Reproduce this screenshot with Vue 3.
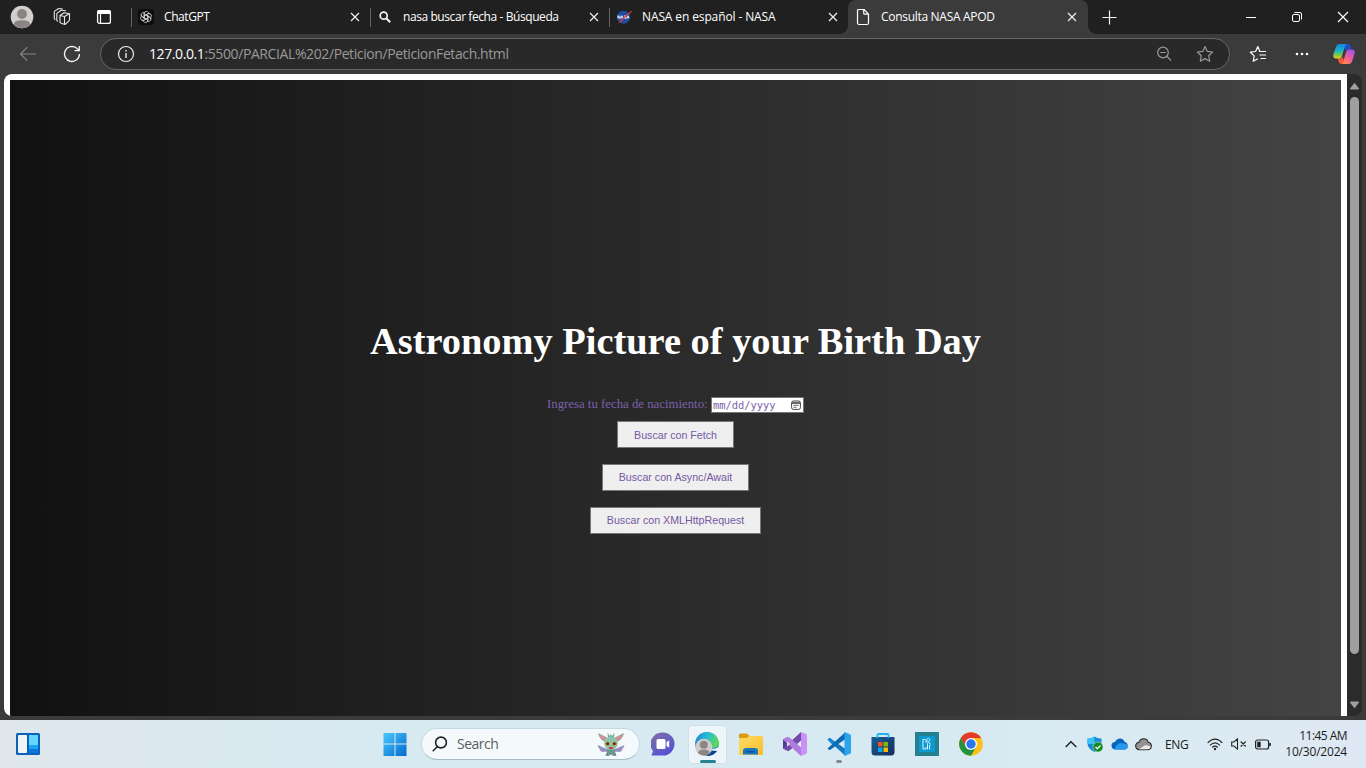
<script setup>
const tabs = [
  { title: 'ChatGPT', icon: 'gpt', fit: 'fit-a' },
  { title: 'nasa buscar fecha - Búsqueda', icon: 'lens', fit: 'fit-b' },
  { title: 'NASA en español - NASA', icon: 'nasa', fit: 'fit-c' },
  { title: 'Consulta NASA APOD', icon: 'doc', fit: 'fit-d', active: true }
]
const petals = [0, 60, 120, 180, 240, 300]
const buttons = [
  { text: 'Buscar con Fetch', size: 'w1' },
  { text: 'Buscar con Async/Await', size: 'w2' },
  { text: 'Buscar con XMLHttpRequest', size: 'w3' }
]
</script>

<template>
  <div class="screen">
    <header class="tabbar">
      <div class="slot s44">
        <svg width="24" height="24" viewBox="0 0 24 24"><circle cx="12" cy="12" r="11.3" fill="#d2d0ce"/><circle cx="12" cy="9" r="5" fill="#8a8582"/><path d="M4 19.500c0-3 2.500-4.200 8-4.200s8 1.200 8 4.200c-4 5-12 5-16 0z" fill="#8a8582"/></svg>
      </div>
      <div class="slot s36">
        <svg width="18" height="18" viewBox="0 0 18 18" fill="none" stroke="#e8e8e8" stroke-width="1.100" stroke-linejoin="round" stroke-linecap="round"><path d="M7 7.500l4.500 1 5-3v6.300q0 .8-.7 1.300L12 16.500l-4-1.300q-1-.3-1-1.200zM11.500 8.700v7.500M7 7.500l4-2.700 5.500.7M4.500 13.200q-.7-.3-.7-1.200V6q0-.7.600-1.100L8 2.500q.5-.3 1-.2l3.500.5M2 11.500q-.7-.3-.7-1.200V4q0-.7.600-1.100L5.300.8q.5-.3 1-.2L9.500 1"/></svg>
      </div>
      <div class="slot s48">
        <svg width="16" height="16" viewBox="0 0 16 16"><rect x="1.600" y="1.600" width="12.800" height="12.800" rx="2" fill="none" stroke="#fff" stroke-width="1.300"/><path d="M1 3q0-2 2-2h10q2 0 2 2v2H1z" fill="#fff"/><path d="M4.500 5v9" stroke="#fff" stroke-width="1.200"/></svg>
      </div>
      <i class="pad"></i>
      <div v-for="t in tabs" :key="t.title" class="tab" :class="{ active: t.active }">
        <div class="fav">
          <svg v-if="t.icon === 'gpt'" width="16" height="16" viewBox="0 0 16 16"><rect width="16" height="16" rx="3" fill="#0d0d0d"/><g fill="none" stroke="#dcdcdc" stroke-width=".75" stroke-linecap="round"><path v-for="r in petals" :key="r" :transform="`rotate(${r} 8 8)`" d="M6.200 9V4.800C6.200 1.900 9.800 1.500 10.800 3.900M6.200 6.900l3.500-2q1.200-.7 2.200 0"/></g></svg>
          <svg v-else-if="t.icon === 'lens'" width="16" height="16" viewBox="0 0 16 16" fill="none" stroke="#f2f2f2" stroke-width="1.700"><circle cx="6.700" cy="6.700" r="3.500"/><path d="m9.200 9.200 4 4" stroke-width="2"/></svg>
          <svg v-else-if="t.icon === 'nasa'" width="16" height="16" viewBox="0 0 16 16"><circle cx="7.500" cy="8.200" r="6.500" fill="#1e4ca0"/><path d="M2 9.500V6.700l2 2.800V6.700M5 9.500l1-2.800 1 2.800M10 6.800H8.500v1.300H10v1.300H8.300M11 9.500l1-2.800 1 2.800" fill="none" stroke="#fff" stroke-width=".9"/><path d="M2.500 14C6 11 9 6 15.500 2.500 11 6 8 10 4 13.500" fill="none" stroke="#e43b35"/></svg>
          <svg v-else width="16" height="18" viewBox="0 0 16 18" fill="none" stroke="#fff" stroke-width="1.200" stroke-linejoin="round"><path d="M3.500 1.500H9l4.500 4.700V15q0 1.500-1.500 1.500H4Q2.500 16.500 2.500 15V2.500q0-1 1-1zM8.700 1.600v3.600q0 1 1 1h3.700"/></svg>
        </div>
        <span class="ttl" :class="t.fit">{{ t.title }}</span>
        <svg class="close" width="10" height="10" viewBox="0 0 10 10" stroke="#f0f0f0" stroke-width="1.200"><path d="m1 1 8 8M9 1 1 9"/></svg>
      </div>
      <div class="slot s43">
        <svg width="15" height="15" viewBox="0 0 15 15" stroke="#f5f5f5"><path d="M7.500.5v14M.5 7.500h14" stroke-width="1.200"/></svg>
      </div>
      <div class="winctl">
        <div class="slot s46"><svg width="12" height="12"><path d="M1 6.500h10" stroke="#fff"/></svg></div>
        <div class="slot s46"><svg width="12" height="12" fill="none" stroke="#fff"><rect x="1.500" y="3.500" width="7" height="7" rx="1.500"/><path d="M3.500 1.500H9q1.500 0 1.500 1.500v5.500"/></svg></div>
        <div class="slot s46"><svg width="12" height="12" stroke="#fff" stroke-width="1.200"><path d="m1 1 10 10M11 1 1 11"/></svg></div>
      </div>
    </header>

    <nav class="toolbar">
      <div class="slot s56"><svg width="18" height="16" viewBox="0 0 18 16" fill="none" stroke="#858585" stroke-width="1.200"><path d="M17 8H1.500M8.200 1.200 1.500 8l6.700 6.700"/></svg></div>
      <div class="slot s32"><svg width="18" height="18" viewBox="0 0 18 18" fill="none" stroke="#f5f5f5" stroke-width="1.300"><path d="M16.500 9A7.500 7.500 0 1 1 13.500 3L16 5.300M16.300 1v4.600h-4.800"/></svg></div>
      <div class="address">
        <svg width="18" height="18" viewBox="0 0 18 18" fill="none" stroke="#eee" stroke-width="1.200"><circle cx="9" cy="9" r="7.500"/><path d="M9 8v5M9 5v1.500" stroke-width="1.400"/></svg>
        <span class="url"><b>127.0.0.1</b>:5500/PARCIAL%202/Peticion/PeticionFetach.html</span>
        <div class="slot s41"><svg width="16" height="16" viewBox="0 0 16 16" fill="none" stroke="#999" stroke-width="1.200"><circle cx="7" cy="6.500" r="5.300"/><path d="M4.300 6.500h5.400M11 10.500l4 4"/></svg></div>
        <div class="slot s41"><svg width="18" height="18" viewBox="0 0 18 18" fill="none" stroke="#999" stroke-width="1.200" stroke-linejoin="round"><path d="m9 1.500 2.300 4.900 5.300.7-3.900 3.700 1 5.400L9 13.600l-4.700 2.600 1-5.400-3.900-3.700 5.300-.7z"/></svg></div>
      </div>
      <div class="slot s56"><svg width="18" height="18" viewBox="0 0 18 18" fill="none" stroke="#fff" stroke-width="1.200" stroke-linejoin="round"><path d="M11 6.500h-.2L8.800 1.600 6.600 6.500l-5.300.7 3.900 3.700-1 5.300 4.600-2.500M10.800 6.500H17M10.500 10H17M11.500 13.500H17"/></svg></div>
      <div class="slot s32 dots"><svg width="16" height="6" fill="#fff"><circle cx="3" cy="3" r="1.300"/><circle cx="8" cy="3" r="1.300"/><circle cx="13" cy="3" r="1.300"/></svg></div>
      <div class="slot s52">
        <svg width="22" height="22" viewBox="0 0 22 22">
          <defs>
            <linearGradient id="cpA" x2="0" y2="1"><stop stop-color="#1785dd"/><stop offset=".45" stop-color="#18b5c9"/><stop offset=".75" stop-color="#77c64b"/><stop offset="1" stop-color="#f9cf17"/></linearGradient>
            <linearGradient id="cpB" x1=".8" x2=".2" y2="1"><stop stop-color="#a251ea"/><stop offset=".5" stop-color="#ec5aa2"/><stop offset="1" stop-color="#ff8c48"/></linearGradient>
          </defs>
          <path d="M10 1h5q2 0 2.700 3l.8 2.500h-4q-1.500 0-2 1.500z" fill="#1c4fd0"/>
          <path d="M12 21H8.500q-2.500 0-3-3l-.8-2.500H7q2 0 2.500-2z" fill="#f75a38"/>
          <path d="M6.500 1H14q-1.500 0-2.200 2.500L9 13q-.8 2.500-3 2.500H3Q-.500 15.500.5 11L3 4q1-3 3.500-3z" fill="url(#cpA)"/>
          <path d="M15.700 21H8q1.700 0 2.400-2.500L13 9q.7-2.500 3-2.500h3q3.500 0 2.500 4.500l-2.300 7q-1 3-3.500 3z" fill="url(#cpB)"/>
        </svg>
      </div>
    </nav>

    <div class="viewport">
      <div class="page">
        <main>
          <h1>Astronomy Picture of your Birth Day</h1>
          <div class="field">
            <label>Ingresa tu fecha de nacimiento:</label>
            <div class="date">
              <span>mm/dd/yyyy</span>
              <svg width="10" height="10" viewBox="0 0 10 10" fill="none" stroke="#444"><rect x=".6" y="1" width="8.800" height="8.400" rx="1.800"/><path d="M1 3h8" stroke-width="1.600"/><path d="M2.500 5.300h5M2.500 7.300h3" stroke-width=".8"/></svg>
            </div>
          </div>
          <button v-for="b in buttons" :key="b.text" :class="b.size">{{ b.text }}</button>
        </main>
      </div>
      <div class="scroll">
        <svg width="11" height="8"><path d="M5.500.8 10 6.500q0 1-1 1H2q-1 0-1-1z" fill="#a0a0a0"/></svg>
        <div class="thumb"></div>
        <svg width="11" height="8"><path d="M5.500 7.200 1 1.500q0-1 1-1h7q1 0 1 1z" fill="#a0a0a0"/></svg>
      </div>
    </div>

    <footer class="taskbar">
      <div class="slot s56">
        <svg width="24" height="24" viewBox="0 0 24 24"><rect y="1" width="24" height="22" rx="1.500" fill="#0b62b8"/><rect x="2" y="3" width="9" height="18" rx="1" fill="#f2f4f6"/><path d="M13 3h9v10h-9z" fill="#64d5fc"/><path d="M13 13h9v4h-9z" fill="#19a4f5"/><path d="M13 17h9v4h-9z" fill="#0876dc"/></svg>
      </div>
      <div class="apps">
        <div class="slot s50">
          <svg width="24" height="24" viewBox="0 0 24 24"><defs><linearGradient id="win" x2="1" y2="1"><stop stop-color="#4cc8fb"/><stop offset="1" stop-color="#0069cf"/></linearGradient></defs><path d="M1 1h10.500v10.500H.5V1.500q0-.5.500-.5zM12.500 1H23q.5 0 .5.500v10h-11zM.5 12.500h11V24H1q-.5 0-.5-.5zM12.500 12.500h11v11q0 .5-.5.500H12.500z" fill="url(#win)"/></svg>
        </div>
        <div class="search">
          <svg width="16" height="16" viewBox="0 0 16 16" fill="none" stroke="#222" stroke-width="1.600" stroke-linecap="round"><circle cx="9" cy="6.500" r="5.400"/><path d="m5.200 10.700-4 4"/></svg>
          <span>Search</span>
          <svg width="28" height="24" viewBox="0 0 28 24">
            <path d="M10 17 .5 13q.7 3 2.500 4l-.5 1.500 2 .5v1l6.500-.5zM18 17l9.500-4q-.7 3-2.500 4l.5 1.500-2 .5v1l-6.500-.5z" fill="#9a8ec0"/>
            <path d="M9 10Q2.500 8 1 1l9 4.500zM19 10Q25.500 8 27 1l-9 4.500z" fill="#6daf9c"/>
            <path d="M8.500 9Q3.500 7 2.200 2.300L9.500 6zM19.500 9Q24.500 7 25.800 2.300L18.500 6z" fill="#ef858f"/>
            <path d="M11 6l-.5-5L13 4l1-2 1 2 2.500-3L17 6z" fill="#75a99c"/>
            <ellipse cx="14" cy="19" rx="4.300" ry="4" fill="#68998e"/><path d="M10.500 20.500l-1 2.500h3M17.500 20.500l1 2.500h-3" stroke="#587d76" stroke-width="1.300" fill="none"/>
            <ellipse cx="14" cy="11.300" rx="6.800" ry="6.700" fill="#88c6ae"/>
            <circle cx="10.500" cy="11.800" r="2.300" fill="#d98a36"/><circle cx="17.500" cy="11.800" r="2.300" fill="#d98a36"/><circle cx="10.700" cy="11.800" r="1.300" fill="#31231d"/><circle cx="17.300" cy="11.800" r="1.300" fill="#31231d"/>
            <path d="M11.500 14.900h5q-1 2.600-2.500 2.600t-2.500-2.600z" fill="#cc3c35"/>
          </svg>
        </div>
        <div class="slot s44">
          <svg width="24" height="24" viewBox="0 0 24 24"><defs><linearGradient id="ch" x1=".1" y1=".2" x2=".6" y2="1"><stop stop-color="#7d68ac"/><stop offset=".5" stop-color="#6560c0"/><stop offset="1" stop-color="#5650d2"/></linearGradient></defs><path d="M12 .500A11.500 11.500 0 1 1 12 23.500H1.500Q0 23.500 1 22l1-3A11.500 11.500 0 0 1 12 .500z" fill="url(#ch)"/><rect x="5.500" y="7" width="9" height="10" rx="1.500" fill="#fff"/><path d="m15.500 10.200 2.700-2v7.600l-2.700-2z" fill="#fff"/></svg>
        </div>
        <div class="slot s44">
          <div class="current">
            <svg width="24" height="24" viewBox="0 0 24 24">
              <defs><linearGradient id="ed" y1=".2" x2="1" y2=".5"><stop stop-color="#178bd0"/><stop offset=".5" stop-color="#28c0d5"/><stop offset="1" stop-color="#5fdb4b"/></linearGradient></defs>
              <circle cx="12" cy="12" r="11.800" fill="#147fcb"/><path d="M.3 11C2-3.500 22-3.500 23.800 10.500c.5 5-6 7-9 4.500-1.200-1 1-2 0-4.500C12.500 5.500 4 5.500.3 11z" fill="url(#ed)"/><path d="M14 17c3 2.500 7 2 8.500 1-2 4.500-7 6.500-11 5.800z" fill="#0b4695"/><path d="M14.500 11c1.300 2-.5 3 .3 4.200 2.200 2.700 7 1.800 8.400-.7l.8 3-2 1.500-8.500-1z" fill="#eef5fb"/>
              <circle cx="8.800" cy="15.300" r="8.500" fill="#cfcdcc"/><circle cx="8.800" cy="12.800" r="4" fill="#8b8682"/><path d="M3 21q0-3.500 5.800-3.500T14.600 21q-5.800 5-11.600 0z" fill="#8b8682"/>
            </svg>
            <i></i>
          </div>
        </div>
        <div class="slot s44">
          <svg width="24" height="24" viewBox="0 0 24 24"><defs><linearGradient id="fo" y2="1"><stop stop-color="#ffdc68"/><stop offset="1" stop-color="#f9bd29"/></linearGradient></defs><path d="M0 3q0-1.500 1.500-1.500H8L10.500 4v5H0z" fill="#dd9a0d"/><path d="M0 6h8l2.500-2H23q1 0 1 1v17q0 1-1 1H1q-1 0-1-1z" fill="url(#fo)"/><path d="M4 22.500V19q0-3 3-3h9q3 0 3 3v3.500z" fill="#1877c5"/><path d="M7 19.700h9" stroke="#0b4f94" stroke-width="1.500"/></svg>
        </div>
        <div class="slot s44">
          <svg width="24" height="24" viewBox="0 0 24 24"><path d="M0 7.500 4.500 5v13.500L0 16.500z" fill="#5c3a90"/><path d="M18 0v8.500L6.500 18.500q-1 .8-2.200.3L0 16.500z" fill="#7449a8"/><path d="M0 7.500 4.300 5.300q1.200-.5 2.200.3L18 15.500V24z" fill="#b07cdf"/><path d="m18 0 5 2q1 .4 1 1.400v17.200q0 1-1 1.400l-5 2z" fill="#c791f7"/><path d="M4 9.500 7 12l-3 2.500z" fill="#d9ebf3"/></svg>
        </div>
        <div class="slot s44">
          <div class="running">
            <svg width="24" height="24" viewBox="0 0 24 24"><path d="M.5 7.500 2 6.200q.7-.5 1.300 0L18.500 17v7z" fill="#1579c1"/><path d="M.5 16.500 2 17.800q.7.500 1.300 0L18.500 7V0z" fill="#0a6db4"/><path d="m17.500 0 5.500 2.300q1 .5 1 1.500v16.400q0 1-1 1.500L17.500 24z" fill="#2aa4ec"/><path d="M.6 7.500 2 6.200q.7-.5 1.300 0L7 9.500 4.500 12z" fill="#128bd6"/></svg>
            <i></i>
          </div>
        </div>
        <div class="slot s44">
          <svg width="24" height="24" viewBox="0 0 24 24"><defs><linearGradient id="st" x2="1" y2="1"><stop stop-color="#195e9a"/><stop offset="1" stop-color="#162c5c"/></linearGradient></defs><path d="M.500 5h23v15q0 3.500-3.500 3.500H4Q.500 23.500.500 20z" fill="url(#st)"/><path d="M6.500 6V3q0-1 1-1h9q1 0 1 1v3" stroke="#21b4ec" stroke-width="1.800" fill="none"/><path d="M7 10h4.500v4.500H7z" fill="#f25022"/><path d="M12.500 10H17v4.500h-4.500z" fill="#7fba00"/><path d="M7 15.500h4.500V20H7z" fill="#00a4ef"/><path d="M12.500 15.500H17V20h-4.500z" fill="#ffb900"/></svg>
        </div>
        <div class="slot s44">
          <svg width="24" height="24" viewBox="0 0 24 24" fill="none"><path d="M0 0h24v24H0z" fill="#25808f"/><path d="M4 4h16v16H4z" fill="#0b9bd2"/><path d="M10.500 7.500H8v9.500h3v-2M11 8v3M12.500 17.500v-6q0-1 1-1l2.500 2M14.500 13v4.500" stroke="#d8f3fb"/><circle cx="13.300" cy="8" r="1.600" stroke="#d8f3fb" stroke-width=".8"/></svg>
        </div>
        <div class="slot s44">
          <svg width="24" height="24" viewBox="0 0 24 24"><circle cx="12" cy="12" r="11.800" fill="#fbc116"/><path d="M1.800 6A11.800 11.800 0 0 1 22.200 6H12L7 15z" fill="#e33b2e"/><path d="M1.800 6A11.800 11.800 0 0 0 12 23.800L17.200 15H7z" fill="#229342"/><circle cx="12" cy="12" r="6" fill="#fff"/><circle cx="12" cy="12" r="4.700" fill="#2878ec"/></svg>
        </div>
      </div>
      <div class="tray">
        <div class="slot s24"><svg width="12" height="8" fill="none" stroke="#1a1a1a" stroke-width="1.300"><path d="m.700 7 5.300-5.300L11.300 7"/></svg></div>
        <div class="slot s24"><svg width="16" height="16" viewBox="0 0 16 16"><path d="M7.500.5Q11 3 14.500 2.500V7q0 6-7 9-7-3-7-9V2.500Q4 3 7.500.5z" fill="#168bd5"/><path d="M7.500.5V8h-7V2.500Q4 3 7.500.5z" fill="#39c2f5"/><circle cx="11" cy="11" r="5" fill="#0d8a20" stroke="#def0f5" stroke-width=".5"/><path d="m8.500 11 1.800 1.800 3.200-3.300" stroke="#fff" fill="none" stroke-width="1.300"/></svg></div>
        <div class="slot s24"><svg width="17" height="12" viewBox="0 0 17 12"><path d="M4 11.500Q.5 11 .5 7.500T4 4q1.500-3.500 5-3.500T13.700 4q3 .5 3 4t-3.500 3.500z" fill="#0867bd"/><path d="M3.500 11.500Q5 6 9.500 5l5 1q2.500.7 2.200 3-.3 2.500-3 2.500z" fill="#269aea"/></svg></div>
        <div class="slot s24"><svg width="17" height="13" viewBox="0 0 17 13"><path d="M4 11.700Q.7 11 .7 8T4 4.300Q5 .8 8.700.8t4.500 3.500q3.100.4 3.100 3.700t-3.300 3.700z" fill="#949494" stroke="#222" stroke-width="1.100"/><path d="M4 11.200 10.500 7l5.100 1.500q-.3 2.700-2.800 2.700z" fill="#ececec"/></svg></div>
        <span class="lang">ENG</span>
        <div class="slot s24"><svg width="16" height="13" viewBox="0 0 16 13" fill="none" stroke="#222" stroke-width="1.100"><path d="M.7 4.800q7.300-7.300 14.600 0M3 7.300q5-4.800 10 0M5.200 9.500q2.800-2.600 5.600 0"/><circle cx="8" cy="11" r="1.200" fill="#222" stroke="none"/></svg></div>
        <div class="slot s24"><svg width="16" height="12" viewBox="0 0 16 12" fill="none" stroke="#222" stroke-width="1.100"><path d="M.7 4h2.200L6.500.9v10.200L2.900 8H.7zM9.700 3.500l5 5M14.700 3.500l-5 5"/></svg></div>
        <div class="slot s24"><svg width="16" height="11" viewBox="0 0 16 11"><rect x=".6" y="1" width="13" height="9" rx="2" fill="none" stroke="#222" stroke-width="1.200"/><path d="M2.200 2.700h3.500v5.600H2.200z" fill="#222"/><path d="M15 4v3" stroke="#222" stroke-width="1.600"/></svg></div>
        <div class="clock"><span class="hour">11:45 AM</span><span>10/30/2024</span></div>
      </div>
    </footer>
  </div>
</template>

<style>
body { margin: 0; overflow: hidden; }
</style>

<style scoped>
* { box-sizing: border-box; }
svg { display: block; flex: none; }
.screen { width: 1366px; height: 768px; display: flex; flex-direction: column; background: #3b3b3b; font-family: "Open Sans", "Noto Sans", sans-serif; overflow: hidden; }
.slot { display: flex; align-items: center; justify-content: center; flex: none; height: 100%; }
.s24 { width: 24px; }
.s32 { width: 32px; }
.s36 { width: 36px; }
.s41 { width: 41px; }
.s43 { width: 43px; }
.s44 { width: 44px; }
.s46 { width: 46px; }
.s48 { width: 48px; }
.s50 { width: 50px; }
.s52 { width: 52px; }
.s56 { width: 56px; }
.pad { width: 3px; flex: none; }
.tabbar { height: 34px; display: flex; background: #202020; flex: none; }
.tab { width: 239px; display: flex; align-items: center; padding-left: 7px; flex: none; position: relative; color: #fff; font-size: 12px; }
.tab::before { content: ""; position: absolute; left: 0; top: 8px; width: 1px; height: 19px; background: #666; }
.tab.active { background: #3b3b3b; border-radius: 8px 8px 0 0; width: 240px; }
.tab.active::before { left: -8px; top: 26px; width: 8px; height: 8px; background: radial-gradient(circle at 0 0, #202020 7.500px, #3b3b3b 8px); }
.tab.active::after { content: ""; position: absolute; right: -8px; top: 26px; width: 8px; height: 8px; background: radial-gradient(circle at 100% 0, #202020 7.500px, #3b3b3b 8px); }
.fav { width: 16px; flex: none; }
.ttl { width: 186px; margin-left: 10px; white-space: nowrap; line-height: 16px; flex: none; }
.fit-a { letter-spacing: -0.42px; }
.fit-b { letter-spacing: -0.42px; }
.fit-c { letter-spacing: -0.12px; }
.fit-d { letter-spacing: -0.3px; }
.winctl { display: flex; margin-left: auto; }
.toolbar { height: 40px; display: flex; align-items: center; flex: none; }
.toolbar .s32 { margin-right: 12px; }
.toolbar .dots { margin-right: 0; }
.address { width: 1130px; height: 32px; border: 1px solid #666; border-radius: 16px; background: #292929; display: flex; align-items: center; padding: 0 4px 0 16px; flex: none; }
.url { flex: 1; margin-left: 14px; font-size: 14px; line-height: 18px; padding-bottom: 1px; letter-spacing: -0.4px; color: #999; white-space: nowrap; }
.url b { font-weight: 400; color: #fff; }
.viewport { height: 642px; margin: 0 4px; display: flex; border-radius: 8px; overflow: hidden; background: #2b2b2b; flex: none; }
.page { width: 1343px; padding: 6px 6px 0; background: #fff; }
main { height: 636px; background: linear-gradient(to right, #111, #444); display: flex; flex-direction: column; align-items: center; padding-top: 239px; font-family: "Liberation Serif", serif; }
h1 { margin: 0; height: 44px; line-height: 44px; font-size: 38.400px; color: #fff; white-space: nowrap; }
.field { display: flex; align-items: center; height: 16px; margin: 34px 0 8px; gap: 4px; color: #7d60ab; }
label { font-size: 12.800px; line-height: 14px; padding-bottom: 2px; white-space: nowrap; width: 160px; }
.date { width: 93px; height: 16px; background: #fff; border: 1px solid #767676; display: flex; align-items: center; justify-content: space-between; padding: 0 2px 0 1px; font-family: "DejaVu Sans Mono", monospace; font-size: 10.400px; line-height: 14px; }
button { height: 27px; margin: 0 0 16px; padding: 0; border: 1px solid #767676; background: #efefef; color: #7459a3; font: 10.667px "Liberation Sans", Arial, sans-serif; white-space: nowrap; }
.w1 { width: 117px; }
.w2 { width: 147px; padding-bottom: 2px; }
.w3 { width: 171px; padding-bottom: 2px; }
.scroll { width: 15px; display: flex; flex-direction: column; align-items: center; padding: 8px 0 7px; justify-content: space-between; }
.thumb { width: 9px; height: 557px; margin: 7px 0 auto; background: #9f9f9f; border-radius: 5px; }
.taskbar { height: 48px; margin-top: 4px; display: flex; background: linear-gradient(to right, #dfe7ec, #d7eaf2 28%, #d7eaf2 72%, #dceaf3 90%, #dfe8f4); flex: none; }
.apps { display: flex; align-items: center; margin-left: 314px; }
.search { width: 219px; height: 32px; margin: 0 1px; border-radius: 16px; border: 1px solid #c4d9e2; border-bottom-color: #aabcc5; background: #f4f9fc; display: flex; align-items: center; padding: 0 14px 0 10px; }
.search span { flex: 1; margin-left: 9px; font-size: 14px; line-height: 18px; padding-bottom: 1px; letter-spacing: -0.5px; color: #5d5d5d; }
.current { width: 39px; height: 39px; border-radius: 4px; background: #edf5fa; border: 1px solid #d2e0e8; display: flex; justify-content: center; align-items: center; position: relative; }
.current i { position: absolute; left: 11px; bottom: 0; width: 16px; height: 3px; border-radius: 2px; background: #268391; }
.running { position: relative; }
.running i { position: absolute; left: 9px; bottom: -7px; width: 6px; height: 3px; border-radius: 2px; background: #858a8e; }
.tray { display: flex; align-items: center; margin-left: auto; padding-right: 19px; color: #1b1b1b; }
.lang { width: 48px; padding-left: 10px; font-size: 12px; letter-spacing: -0.3px; }
.clock { width: 72px; display: flex; flex-direction: column; align-items: flex-end; font-size: 12px; line-height: 16px; letter-spacing: -0.2px; white-space: nowrap; }
.hour { letter-spacing: -0.55px; }
</style>
